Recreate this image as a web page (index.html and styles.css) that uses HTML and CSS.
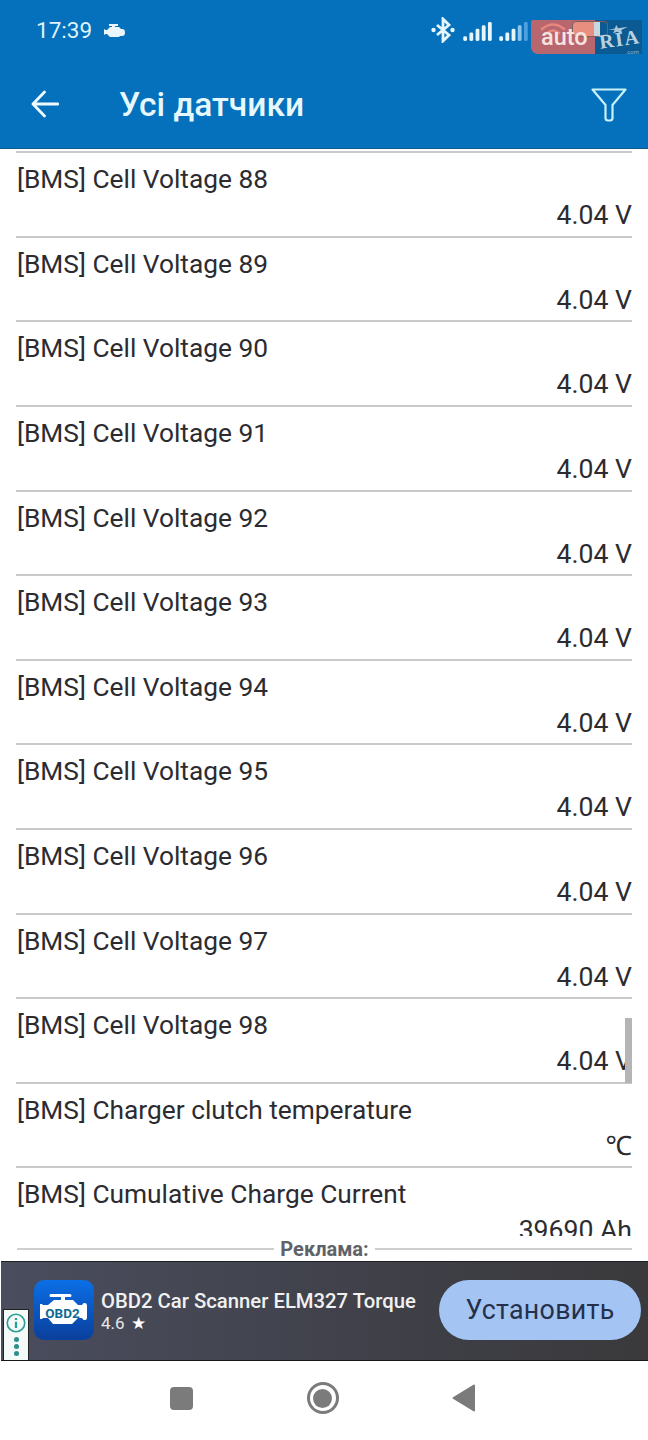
FILE: index.html
```html
<!DOCTYPE html>
<html lang="uk">
<head>
<meta charset="utf-8">
<title>Усі датчики</title>
<link rel="stylesheet" href="styles.css">
</head>
<body>
<div class="app">
  <header class="header">
    <div class="status">
      <span class="time">17:39</span>
      <svg class="engine" viewBox="0 0 22 14"><path d="M6 1h9v2h-3v1h4l2 2h1c2 0 3 1 3 3.500S21 13 19 13h-2l-1 1H7l-3-3H2.500L1 12V6l1.500 1H4l3-3h2V3H6z" fill="#eaf6fb"/></svg>
      <span class="status-right">
        <svg class="bt" viewBox="0 0 24 26" fill="none" stroke="#e6f6fb" stroke-width="2.800"><path d="M6 8l12 10-6 6V2l6 6L6 18"/><circle cx="2.500" cy="13" r="2.200" fill="#e6f6fb" stroke="none"/><circle cx="21.500" cy="13" r="2.200" fill="#e6f6fb" stroke="none"/></svg>
        <svg class="sig" viewBox="0 0 30 20"><g fill="#e6f6fb"><rect x="0" y="15" width="4" height="5" rx="1.500"/><rect x="6.500" y="11" width="4" height="9" rx="1.500"/><rect x="13" y="7" width="4" height="13" rx="1.500"/><rect x="19.500" y="3.500" width="4" height="16.500" rx="1.500"/><rect x="26" y="0" width="4" height="20" rx="1.500"/></g></svg>
        <svg class="sig" viewBox="0 0 30 20"><g fill="#e6f6fb"><rect x="0" y="15" width="4" height="5" rx="1.500"/><rect x="6.500" y="11" width="4" height="9" rx="1.500"/><rect x="13" y="7" width="4" height="13" rx="1.500"/></g><rect x="19.500" y="3.500" width="4" height="16.500" rx="1.500" fill="#8cc6ee"/><rect x="26" y="0" width="4" height="20" rx="1.500" fill="#4ba0e0"/></svg>
      </span>
    </div>
    <div class="toolbar">
      <svg class="back" viewBox="0 0 28 28" fill="none" stroke="#eefafd" stroke-width="2.800" stroke-linecap="round" stroke-linejoin="round"><path d="M27 14H2M13.500 2L2 14l11.500 12"/></svg>
      <h1 class="title">Усі датчики</h1>
      <svg class="filter" viewBox="0 0 36 34" fill="none" stroke="#c8f1f8" stroke-width="2.200" stroke-linejoin="round"><path d="M1.500 1.500h33L21.500 17v13q0 2.500-2.500 2.500h-2q-2.500 0-2.500-2.500V17z"/></svg>
    </div>
  </header>

  <main class="list">
    <div class="row first"></div>
    <div class="row"><div class="name">[BMS] Cell Voltage 88</div><div class="value">4.04 V</div></div>
    <div class="row"><div class="name">[BMS] Cell Voltage 89</div><div class="value">4.04 V</div></div>
    <div class="row"><div class="name">[BMS] Cell Voltage 90</div><div class="value">4.04 V</div></div>
    <div class="row"><div class="name">[BMS] Cell Voltage 91</div><div class="value">4.04 V</div></div>
    <div class="row"><div class="name">[BMS] Cell Voltage 92</div><div class="value">4.04 V</div></div>
    <div class="row"><div class="name">[BMS] Cell Voltage 93</div><div class="value">4.04 V</div></div>
    <div class="row"><div class="name">[BMS] Cell Voltage 94</div><div class="value">4.04 V</div></div>
    <div class="row"><div class="name">[BMS] Cell Voltage 95</div><div class="value">4.04 V</div></div>
    <div class="row"><div class="name">[BMS] Cell Voltage 96</div><div class="value">4.04 V</div></div>
    <div class="row"><div class="name">[BMS] Cell Voltage 97</div><div class="value">4.04 V</div></div>
    <div class="row"><div class="name">[BMS] Cell Voltage 98</div><div class="value">4.04 V</div></div>
    <div class="row"><div class="name">[BMS] Charger clutch temperature</div><div class="value">℃</div></div>
    <div class="row"><div class="name">[BMS] Cumulative Charge Current</div><div class="value">39690 Ah</div></div>
    <div class="scrollbar"></div>
  </main>

  <div class="ad-label"><span class="ad-line"></span><span class="ad-text">Реклама:</span><span class="ad-line"></span></div>

  <section class="ad">
    <div class="ad-info">
      <svg viewBox="0 0 16 16" class="ad-i" fill="none" stroke="#2a9d96" stroke-width="1.300"><circle cx="8" cy="8" r="7"/><path d="M8 7v5M8 4v1.600" stroke-width="1.800"/></svg>
      <span class="dot"></span><span class="dot"></span><span class="dot"></span>
    </div>
    <svg class="app-icon" viewBox="0 0 60 60">
      <defs><linearGradient id="blue" x1="0" y1="0" x2="0" y2="1"><stop offset="0" stop-color="#0b6fe6"/><stop offset="1" stop-color="#0a3f9c"/></linearGradient></defs>
      <rect width="60" height="60" rx="10" fill="url(#blue)"/>
      <path d="M17 14h19q1.500 0 1.500 1.500T36 17h-5v3h8l5 5h4q1-2 2-2h1q2 0 2 2.500v12q0 2.500-2 2.500h-1q-1 0-2-2h-4l-6 6H19l-5-6H9l-1 1H6V24h2l1 1h5l6-5h7v-3h-10q-1.500 0-1.500-1.500T17 14z" fill="#fff"/>
      <text x="28.500" y="38" text-anchor="middle" class="icon-text">OBD2</text>
    </svg>
    <div class="ad-copy">
      <div class="ad-title">OBD2 Car Scanner ELM327 Torque</div>
      <div class="ad-rating">4.6 <span class="star">★</span></div>
    </div>
    <div class="ad-btn">Установить</div>
  </section>

  <nav class="nav">
    <span class="nav-square"></span>
    <span class="nav-circle"><span class="nav-core"></span></span>
    <svg class="nav-back" viewBox="0 0 24 28"><path d="M22 1.500v25L1.500 14z" fill="#7b7b7b" stroke="#7b7b7b" stroke-width="2" stroke-linejoin="round"/></svg>
  </nav>

  <div class="watermark">
    <div class="wm-auto">
      <svg class="wm-arcs" viewBox="0 0 26 14" fill="none" stroke="#e8877e" stroke-width="2.600" stroke-linecap="round"><path d="M2 8q11-9 22 0M7 12q6-5 12 0"/></svg>
      <span class="wm-auto-text">auto</span>
    </div>
    <div class="wm-ria">
      <svg class="wm-star" viewBox="0 0 24 12"><path d="M0 5l8-.5L10 0l2 4 12-2-8 4 1 5-6-3-5 2 2-4z" fill="#a9c8dc"/></svg>
      <span class="wm-ria-text">RIA</span>
      <span class="wm-com">.com</span>
    </div>
    <span class="wm-battery"></span>
  </div>
</div>
</body>
</html>
```

FILE: styles.css
```css
* { box-sizing: border-box; }
html, body { margin: 0; padding: 0; background: #fff; }
.app {
  position: relative;
  width: 648px;
  height: 1440px;
  display: flex;
  flex-direction: column;
  overflow: hidden;
  font-family: Roboto, "Noto Sans", sans-serif;
}
.header {
  height: 149px;
  flex: none;
  background: #0570bc;
  border-bottom: 1px solid #0a5c92;
  color: #eefafd;
}
.status {
  display: flex;
  align-items: center;
  height: 60px;
  padding: 0 120px 0 36px;
}
.time { font-size: 22.500px; color: #dff3fb; }
.engine { width: 22px; height: 14px; margin-left: 11px; }
.status-right { margin-left: auto; display: flex; align-items: center; gap: 7px; }
.bt { width: 24px; height: 26px; margin-right: 1px; }
.sig { width: 29px; height: 19px; margin-top: 2px; }
.toolbar {
  display: flex;
  align-items: center;
  height: 88px;
  padding: 0 21px 0 31px;
}
.back { width: 28px; height: 28px; margin-top: -1px; }
.title {
  margin: 0 0 0 60px;
  font-size: 33.600px;
  font-weight: 500;
  color: #e6f8fc;
}
.filter { width: 36px; height: 34px; margin-left: auto; margin-top: 1px; }

.list {
  position: relative;
  flex: none;
  height: 1087px;
  overflow: hidden;
  padding: 0 16px;
}
.row {
  height: 84.600px;
  border-bottom: 2px solid #c9c9c9;
  color: #2c2c30;
  font-size: 26.600px;
}
.row.first { height: 4.300px; }
.name { padding-top: 8px; line-height: 36px; padding-left: 1px; font-size: 26.300px; }
.value { text-align: right; line-height: 35px; }
.scrollbar {
  position: absolute;
  right: 16px;
  top: 869px;
  width: 7px;
  height: 65px;
  background: #b5b5b5;
}

.ad-label {
  flex: none;
  height: 25px;
  display: flex;
  align-items: center;
  gap: 6px;
  padding: 0 16px 0 17px;
}
.ad-line { flex: 1; height: 2px; background: #cfcfcf; }
.ad-text { font-size: 20px; font-weight: 700; color: #5f6368; }

.ad {
  position: relative;
  flex: none;
  height: 100px;
  margin-left: 1px;
  display: flex;
  align-items: center;
  padding: 0 7px 3px 33px;
  background: linear-gradient(90deg, #4a4d5e, #3f4048 60%, #3a3a3c);
  border-top: 1px solid #1e2026;
  border-bottom: 1px solid #15161a;
}
.ad-info {
  position: absolute;
  left: 2px;
  bottom: 0;
  width: 26px;
  height: 51px;
  background: #f4faf8;
  border: 1px solid #222;
  border-bottom: none;
  display: flex;
  flex-direction: column;
  align-items: center;
  gap: 2px;
  padding-top: 3px;
}
.ad-i { width: 20px; height: 20px; margin-bottom: 2px; flex: none; }
.dot { width: 5px; height: 5px; border-radius: 50%; background: #2a8f8a; flex: none; }
.app-icon { width: 60px; height: 60px; flex: none; }
.icon-text { font: 700 13.500px Roboto, sans-serif; fill: #0e6a92; }
.ad-copy { margin-left: 7px; flex: 1; min-width: 0; }
.ad-title {
  font-size: 20.300px;
  font-weight: 500;
  color: #f1f1f1;
  white-space: nowrap;
  line-height: 26px;
  margin-top: 2px;
}
.ad-rating { font-size: 17px; color: #e8e8e8; line-height: 22px; margin-top: -2px; }
.star { color: #fff; font-size: 17px; margin-left: 2px; }
.ad-btn {
  flex: none;
  width: 202px;
  height: 60px;
  border-radius: 30px;
  background: #a4c4f4;
  color: #25304a;
  font-size: 26.800px;
  display: flex;
  align-items: center;
  justify-content: center;
  letter-spacing: .3px;
}

.nav {
  flex: 1;
  position: relative;
  display: flex;
  align-items: center;
  padding: 0 172px 5px 170px;
  justify-content: space-between;
}
.nav-square { width: 23px; height: 23px; border-radius: 4px; background: #7b7b7b; }
.nav-circle {
  width: 32px; height: 32px; border-radius: 50%;
  border: 3px solid #7b7b7b;
  display: flex; align-items: center; justify-content: center;
}
.nav-core { width: 19px; height: 19px; border-radius: 50%; background: #7b7b7b; }
.nav-back { width: 24px; height: 28px; }

.watermark {
  position: absolute;
  left: 531px;
  top: 20px;
  width: 111px;
  height: 34px;
  display: flex;
}
.wm-auto {
  position: relative;
  width: 64px;
  background: #b9676e;
  border-radius: 2px 0 0 7px;
}
.wm-arcs {
  position: absolute;
  left: 9px;
  top: 1px;
  width: 26px;
  height: 14px;
}
.wm-auto-text {
  position: absolute;
  z-index: 2;
  left: 10px;
  top: 3px;
  color: #f6e4e0;
  font-size: 23.500px;
  line-height: 28px;
  font-weight: 500;
}
.wm-ria {
  position: relative;
  flex: 1;
  background: #0b5a92;
}
.wm-star {
  position: absolute;
  z-index: 2;
  left: 13px;
  top: 5px;
  width: 20px;
  height: 10px;
}
.wm-ria-text {
  position: absolute;
  z-index: 2;
  left: 4px;
  top: 9px;
  color: #b9d0de;
  font: 700 20px/20px "Liberation Serif", serif;
  letter-spacing: 1.500px;
  transform: rotate(-8deg);
}
.wm-com {
  position: absolute;
  right: 3px;
  bottom: -1px;
  color: #8fb5cf;
  font-size: 6px;
  line-height: 7px;
}
.wm-battery {
  position: absolute;
  left: 41px;
  top: 1px;
  width: 36px;
  height: 16px;
  border: 1.500px solid #7a5f62;
  border-radius: 4px;
  background: linear-gradient(90deg, #e98f80 0 62%, #c9d8de 62% 78%, transparent 78%);
}
```
